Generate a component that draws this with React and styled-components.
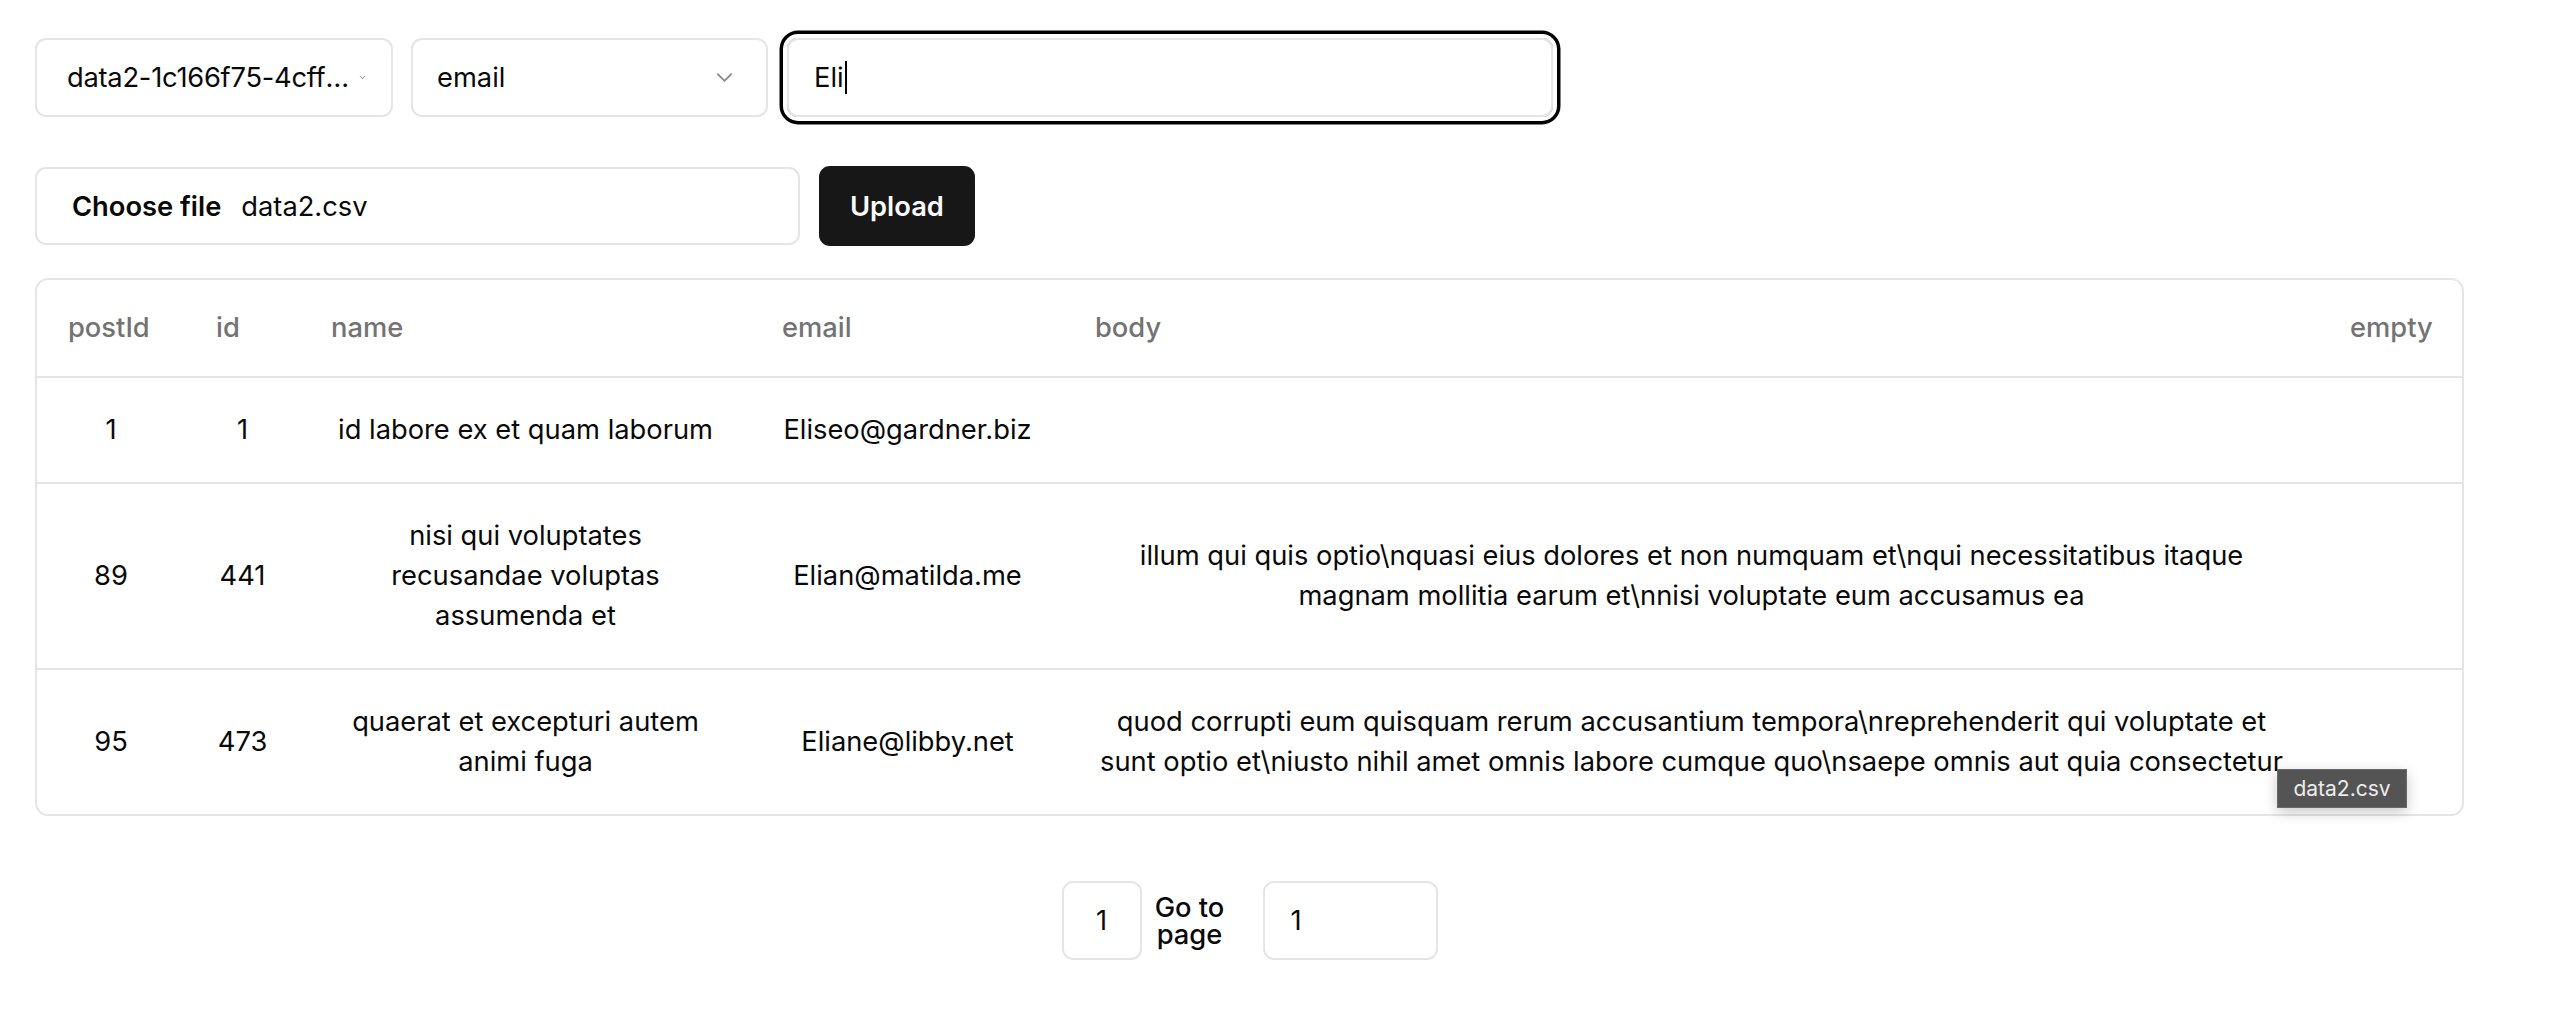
import React from 'react';
import styled, { createGlobalStyle } from 'styled-components';
import { ChevronDown } from 'lucide-react';

const Global = createGlobalStyle`
  * { box-sizing: border-box; }
  body {
    margin: 0;
    background: #ffffff;
    font-family: Inter, "Liberation Sans", sans-serif;
    color: #0a0a0a;
  }
`;

const FS = '27.3px';

const Page = styled.div`
  position: relative;
  padding: 38px 35px;
  width: 2499px;
`;

const Toolbar = styled.div`
  display: flex;
  align-items: center;
  gap: 18px;
`;

const SelectBox = styled.div`
  width: ${p => p.w}px;
  height: 79px;
  display: flex;
  align-items: center;
  justify-content: space-between;
  padding: ${p => p.pad};
  border: 2px solid #e5e5e5;
  border-radius: 11px;
  font-size: ${FS};
  background: #fff;
  white-space: nowrap;
  overflow: hidden;
`;

const SelectText = styled.span`
  overflow: hidden;
  text-overflow: ellipsis;
  min-width: 0;
  letter-spacing: ${p => (p.tight ? '-0.25px' : 'normal')};
`;

const Chevron = styled.span`
  flex: none;
  display: flex;
  color: #555;
`;

const SearchInput = styled.div`
  width: 766px;
  height: 79px;
  margin-left: 1px;
  display: flex;
  align-items: center;
  padding: 0 25px;
  border: 2px solid #e5e5e5;
  border-radius: 11px;
  box-shadow: 0 0 0 4px #ffffff, 0 0 0 7.5px #000000;
  font-size: ${FS};
`;

const Caret = styled.span`
  display: inline-block;
  width: 2px;
  height: 33px;
  background: #000;
  margin-left: 1px;
`;

const FileRow = styled.div`
  display: flex;
  align-items: center;
  gap: 19px;
  margin-top: 49px;
`;

const FileInput = styled.div`
  width: 765px;
  height: 78px;
  display: flex;
  align-items: center;
  gap: 20px;
  padding: 0 35px;
  border: 2px solid #e5e5e5;
  border-radius: 11px;
  font-size: ${FS};
`;

const FileButton = styled.span`
  font-weight: 600;
`;

const UploadButton = styled.button`
  height: 80px;
  padding: 0 31px;
  border: none;
  border-radius: 11px;
  background: #171717;
  color: #fafafa;
  font-family: inherit;
  font-size: ${FS};
  font-weight: 600;
`;

const TableWrap = styled.div`
  margin-top: 32px;
  width: 2429px;
  border: 2px solid #e5e5e5;
  border-radius: 13px;
  overflow: hidden;
`;

const Table = styled.table`
  width: 100%;
  border-collapse: collapse;
  table-layout: fixed;
  font-size: ${FS};
  line-height: 40px;
`;

const Th = styled.th`
  text-align: ${p => (p.right ? 'right' : 'left')};
  font-weight: 500;
  color: #737373;
  padding: 28px 32px 28px 31px;
  border-bottom: 2px solid #e5e5e5;
`;

const Tr = styled.tr`
  & + & td { border-top: 2px solid #e5e5e5; }
`;

const Td = styled.td`
  text-align: center;
  vertical-align: middle;
  padding: 32px 31px;
`;

const Pagination = styled.div`
  width: 2429px;
  margin-top: 65px;
  display: flex;
  justify-content: center;
  align-items: center;
  font-size: ${FS};
`;

const PageBox = styled.div`
  width: ${p => p.w}px;
  height: 79px;
  display: flex;
  align-items: center;
  justify-content: ${p => (p.center ? 'center' : 'flex-start')};
  padding: ${p => (p.center ? '0' : '0 26px')};
  border: 2px solid #e5e5e5;
  border-radius: 11px;
`;

const GoLabel = styled.span`
  width: 76px;
  margin: 0 35px 0 10px;
  text-align: center;
  font-weight: 500;
  line-height: 27px;
`;

const Tooltip = styled.div`
  position: absolute;
  left: 2277px;
  top: 769px;
  width: 130px;
  height: 39px;
  display: flex;
  align-items: center;
  justify-content: center;
  background: #545454;
  color: #ececec;
  border: 1px solid #6a6a6a;
  font-size: 21px;
  box-shadow: 0 4px 14px rgba(0, 0, 0, 0.22);
`;

const rows = [
  { postId: '1', id: '1', name: 'id labore ex et quam laborum', email: 'Eliseo@gardner.biz', body: '', empty: '' },
  {
    postId: '89',
    id: '441',
    name: 'nisi qui voluptates recusandae voluptas assumenda et',
    email: 'Elian@matilda.me',
    body: 'illum qui quis optio\\nquasi eius dolores et non numquam et\\nqui necessitatibus itaque magnam mollitia earum et\\nnisi voluptate eum accusamus ea',
    empty: '',
  },
  {
    postId: '95',
    id: '473',
    name: 'quaerat et excepturi autem animi fuga',
    email: 'Eliane@libby.net',
    body: 'quod corrupti eum quisquam rerum accusantium tempora\\nreprehenderit qui voluptate et sunt optio et\\niusto nihil amet omnis labore cumque quo\\nsaepe omnis aut quia consectetur',
    empty: '',
  },
];

const cols = [148, 115, 451, 313, 1255, 143];

export default function App() {
  return (
    <Page>
      <Global />
      <Toolbar>
        <SelectBox w={358} pad="0 24px 0 30px">
          <SelectText tight>data2-1c166f75-4cff3a9e-8d21</SelectText>
          <Chevron>
            <ChevronDown size={9} strokeWidth={2} />
          </Chevron>
        </SelectBox>
        <SelectBox w={357} pad="0 28px 0 24px">
          <SelectText>email</SelectText>
          <Chevron>
            <ChevronDown size={27} strokeWidth={1.6} color="#8a8a8a" />
          </Chevron>
        </SelectBox>
        <SearchInput>
          Eli
          <Caret />
        </SearchInput>
      </Toolbar>

      <FileRow>
        <FileInput>
          <FileButton>Choose file</FileButton>
          <span>data2.csv</span>
        </FileInput>
        <UploadButton>Upload</UploadButton>
      </FileRow>

      <TableWrap>
        <Table>
          <colgroup>
            {cols.map((w, i) => (
              <col key={i} style={{ width: w }} />
            ))}
          </colgroup>
          <thead>
            <tr>
              <Th>postId</Th>
              <Th>id</Th>
              <Th>name</Th>
              <Th>email</Th>
              <Th>body</Th>
              <Th right>empty</Th>
            </tr>
          </thead>
          <tbody>
            {rows.map(r => (
              <Tr key={r.id}>
                <Td>{r.postId}</Td>
                <Td>{r.id}</Td>
                <Td>{r.name}</Td>
                <Td>{r.email}</Td>
                <Td>{r.body}</Td>
                <Td>{r.empty}</Td>
              </Tr>
            ))}
          </tbody>
        </Table>
      </TableWrap>

      <Pagination>
        <PageBox w={80} center>1</PageBox>
        <GoLabel>Go to page</GoLabel>
        <PageBox w={175}>1</PageBox>
      </Pagination>

      <Tooltip>data2.csv</Tooltip>
    </Page>
  );
}
